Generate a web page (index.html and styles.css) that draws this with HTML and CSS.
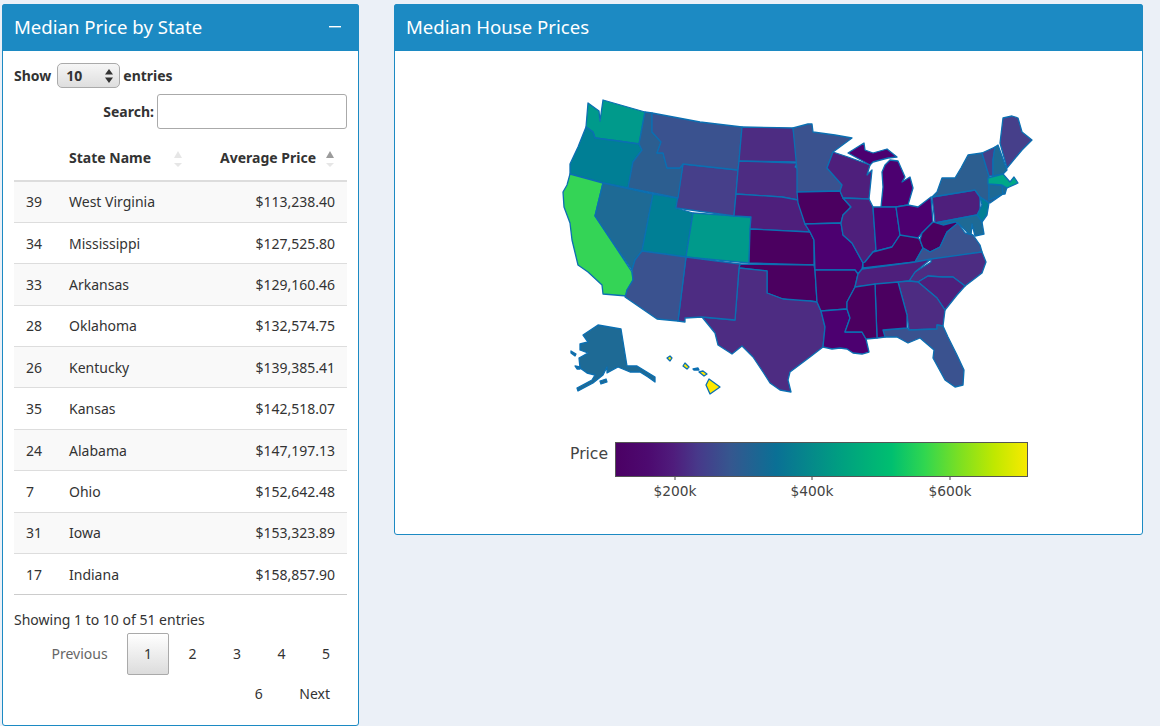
FILE: index.html
```html
<!DOCTYPE html>
<html lang="en">
<head>
  <meta charset="UTF-8" />
  <meta name="viewport" content="width=device-width, initial-scale=1" />
  <title>Median House Prices</title>
  <link rel="stylesheet" href="styles.css">
</head>
<body>

  <div class="dashboard">

    <!-- Table box -->
    <section class="box box-table">
      <header class="box-header">
        <h3>Median Price by State</h3>
        <svg class="collapse-icon" width="12" height="2" viewBox="0 0 12 2"><rect width="12" height="1.4" fill="#fff"/></svg>
      </header>
      <div class="box-body">
        <div class="length-row">
          <label>Show</label>
          <div class="select-wrap">
            <select><option>10</option><option>25</option><option>50</option></select>
            <svg class="select-arrows" width="8" height="14" viewBox="0 0 8 14"><path d="M4 0 8 5.500H0Z M4 14 0 8.500H8Z" fill="#333"/></svg>
          </div>
          <label>entries</label>
        </div>
        <div class="search-row">
          <label>Search:</label>
          <input type="search" />
        </div>

        <table class="price-table">
          <colgroup>
            <col class="col-id"><col class="col-name"><col class="col-price">
          </colgroup>
          <thead>
            <tr>
              <th></th>
              <th>
                <div class="th-name">State Name
                  <svg width="10" height="17" viewBox="0 0 10 17"><path class="sort-off" d="M5 0 9 7H1Z"/><path class="sort-off" d="M5 16 1 12H9Z"/></svg>
                </div>
              </th>
              <th>
                <div class="th-price">Average Price
                  <svg width="10" height="17" viewBox="0 0 10 17"><path class="sort-on" d="M5 0 9 7H1Z"/><path class="sort-off" d="M5 16 1 12H9Z"/></svg>
                </div>
              </th>
            </tr>
          </thead>
          <tbody>
            <tr><td>39</td><td>West Virginia</td><td>$113,238.40</td></tr>
            <tr><td>34</td><td>Mississippi</td><td>$127,525.80</td></tr>
            <tr><td>33</td><td>Arkansas</td><td>$129,160.46</td></tr>
            <tr><td>28</td><td>Oklahoma</td><td>$132,574.75</td></tr>
            <tr><td>26</td><td>Kentucky</td><td>$139,385.41</td></tr>
            <tr><td>35</td><td>Kansas</td><td>$142,518.07</td></tr>
            <tr><td>24</td><td>Alabama</td><td>$147,197.13</td></tr>
            <tr><td>7</td><td>Ohio</td><td>$152,642.48</td></tr>
            <tr><td>31</td><td>Iowa</td><td>$153,323.89</td></tr>
            <tr><td>17</td><td>Indiana</td><td>$158,857.90</td></tr>
          </tbody>
        </table>

        <div class="table-info">Showing 1 to 10 of 51 entries</div>
        <div class="pager">
          <a class="page muted">Previous</a>
          <a class="page current">1</a>
          <a class="page">2</a>
          <a class="page">3</a>
          <a class="page">4</a>
          <a class="page">5</a>
          <a class="page">6</a>
          <a class="page">Next</a>
        </div>
      </div>
    </section>

    <!-- Map box -->
    <section class="box box-map">
      <header class="box-header">
        <h3>Median House Prices</h3>
      </header>
      <svg class="plot" width="747" height="483" viewBox="395 51 747 483">
        <defs>
          <linearGradient id="priceScale">
            <stop offset="0" stop-color="#4b0064"/>
            <stop offset="0.08" stop-color="#4d0a70"/>
            <stop offset="0.14" stop-color="#4f1c7c"/>
            <stop offset="0.2" stop-color="#47398a"/>
            <stop offset="0.28" stop-color="#35578f"/>
            <stop offset="0.39" stop-color="#0a7095"/>
            <stop offset="0.55" stop-color="#00a080"/>
            <stop offset="0.67" stop-color="#00bf70"/>
            <stop offset="0.75" stop-color="#30d650"/>
            <stop offset="0.84" stop-color="#80e020"/>
            <stop offset="0.92" stop-color="#c0e800"/>
            <stop offset="1" stop-color="#f8ea00"/>
          </linearGradient>
        </defs>

        <g class="states">
          <polygon class="v-9" data-state="WA" points="588,103 599,111 600,121 603,100 645,112 639,144 618,141 595,138 593,132 586,127"/>
          <polygon class="v-8" data-state="OR" points="586,127 593,132 595,138 618,141 639,144 642,150 633,162 628,188 603,183 570,174 570,164 578,147"/>
          <polygon class="v-11" data-state="CA" points="570,174 603,183 595,216 611,240 632,272 633,280 627,290 627,296 603,294 602,285 588,272 578,265 572,240 570,223 564,207 563,192 567,185"/>
          <polygon class="v-7" data-state="NV" points="603,183 653,194 642,251 635,260 632,270 611,240 595,216"/>
          <polygon class="v-8" data-state="UT" points="653,194 678,198 676,208 693,213 686,257 642,251"/>
          <polygon class="v-9" data-state="CO" points="693,213 751,217 749,263 686,257"/>
          <polygon class="v-4" data-state="WY" points="683,164 738,170 734,216 676,208"/>
          <polygon class="v-6" data-state="ID" points="645,112 652,113 652,132 661,142 657,153 663,153 667,168 680,168 683,164 678,198 628,188 633,162 642,150 639,144"/>
          <polygon class="v-5" data-state="MT" points="652,113 700,122 742,127 739,161 738,170 683,164 680,168 667,168 663,153 657,153 661,142 652,132"/>
          <polygon class="v-3" data-state="ND" points="742,127 793,128 798,162 739,161"/>
          <polygon class="v-3" data-state="SD" points="739,161 797,163 795,167 800,170 798,200 782,197 736,194 738,170"/>
          <polygon class="v-2" data-state="NE" points="736,194 782,197 798,200 805,224 810,232 750,229 751,217 734,216"/>
          <polygon class="v-0" data-state="KS" points="750,229 810,232 814,240 814,265 749,263"/>
          <polygon class="v-0" data-state="OK" points="740,264 814,265 815,270 817,302 810,301 800,302 783,299 767,293 767,271 739,268"/>
          <polygon class="v-3" data-state="TX" points="739,268 767,271 767,293 783,299 810,301 817,302 821,311 825,327 823,347 810,357 790,372 788,380 791,392 780,390 770,383 763,372 753,357 742,346 732,354 718,345 715,333 702,317 735,320"/>
          <polygon class="v-3" data-state="NM" points="686,257 740,264 739,268 735,320 702,317 685,318 685,322 678,321"/>
          <polygon class="v-5" data-state="AZ" points="642,251 686,257 678,321 657,319 625,297 627,290 633,280 632,270 635,260"/>
          <polygon class="v-5" data-state="MN" points="793,128 808,124 812,124 813,132 835,135 852,138 833,152 827,168 842,185 840,191 797,192 797,170"/>
          <polygon class="v-0" data-state="IA" points="797,192 840,191 843,198 851,207 843,215 841,223 805,224 798,203"/>
          <polygon class="v-1" data-state="MO" points="805,224 841,223 843,235 852,243 863,263 862,269 858,274 855,270 815,270 814,240 810,232"/>
          <polygon class="v-0" data-state="AR" points="815,270 855,270 858,274 855,287 847,302 847,309 821,311 817,302"/>
          <polygon class="v-1" data-state="LA" points="821,311 847,309 850,318 845,332 862,332 866,339 869,352 862,354 853,353 847,349 840,348 832,349 823,347 825,327"/>
          <polygon class="v-2" data-state="WI" points="833,152 848,157 870,165 867,175 872,170 869,199 843,198 840,191 842,185 827,168"/>
          <polygon class="v-1" data-state="MI" points="848,153 864,143 865,150 873,153 887,149 897,157 888,158 873,162 870,165"/>
          <polygon class="v-1" data-state="MI" points="885,165 890,160 898,161 905,177 902,182 910,177 913,188 908,205 896,207 881,207 883,187 882,172"/>
          <polygon class="v-2" data-state="IL" points="843,198 869,199 873,207 876,250 873,252 865,262 863,263 852,243 843,235 841,223 843,215 851,207"/>
          <polygon class="v-1" data-state="IN" points="873,207 896,207 900,235 892,247 873,252 876,250"/>
          <polygon class="v-1" data-state="OH" points="896,207 908,205 918,207 931,197 933,222 922,233 918,238 902,237 900,235"/>
          <polygon class="v-0" data-state="KY" points="900,235 918,238 920,240 923,248 915,262 863,268 863,263 865,262 873,252 892,247"/>
          <polygon class="v-2" data-state="PA" points="932,197 975,190 980,197 980,210 977,215 935,223"/>
          <polygon class="v-6" data-state="NY" points="932,197 937,192 942,178 955,178 961,168 968,155 982,153 989,176 989,200 1003,194 990,203 980,197 975,190"/>
          <polygon class="v-8" data-state="NJ" points="980,197 989,203 987,215 982,222 977,215 982,205"/>
          <polygon class="v-7" data-state="MD" points="935,223 977,215 982,222 984,234 975,236 972,224 971,236 958,223 955,222 943,225"/>
          <polygon class="v-0" data-state="WV" points="933,222 943,225 955,222 958,223 947,232 940,247 930,252 923,248 920,240 922,233"/>
          <polygon class="v-5" data-state="VA" points="958,223 965,233 973,235 980,245 982,252 915,262 923,248 930,252 940,247 947,232"/>
          <polygon class="v-3" data-state="NC" points="982,252 986,262 982,273 965,286 953,277 942,277 928,276 918,282 909,281 915,272 931,262 931,259"/>
          <polygon class="v-2" data-state="TN" points="931,259 915,272 909,281 855,287 858,274 862,269 915,262"/>
          <polygon class="v-2" data-state="SC" points="918,282 928,276 942,277 953,277 965,286 957,295 945,310 937,298"/>
          <polygon class="v-3" data-state="GA" points="898,282 909,281 918,282 937,298 945,310 943,326 937,325 937,329 909,330 907,315"/>
          <polygon class="v-5" data-state="FL" points="883,330 907,328 909,330 937,329 937,325 943,326 948,337 957,355 964,370 963,385 955,387 945,380 933,358 934,350 920,338 908,343 897,337 885,337"/>
          <polygon class="v-0" data-state="AL" points="875,284 898,282 907,315 907,328 883,330 885,337 877,338"/>
          <polygon class="v-0" data-state="MS" points="855,287 875,284 877,338 866,339 862,332 845,332 850,318 847,309 847,302"/>
          <polygon class="v-4" data-state="VT" points="982,153 995,147 993,160 993,176 989,176"/>
          <polygon class="v-7" data-state="NH" points="995,147 998,145 1007,170 1003,174 993,176 993,160"/>
          <polygon class="v-4" data-state="ME" points="1000,143 1003,118 1012,116 1018,118 1022,132 1032,140 1022,150 1007,168"/>
          <polygon class="v-7" data-state="CT" points="989,184 1002,185 1003,194 989,200"/>
          <polygon class="v-7" data-state="RI" points="1002,185 1007,187 1005,194 1003,194"/>
          <polygon class="v-10" data-state="MA" points="988,178 1003,174 1010,182 1014,177 1018,183 1007,188 1002,185 988,184"/>

          <polygon class="v-7" data-state="AK" points="583,335 598,325 621,329 627,366 637,366 655,377 655,382 648,377 640,372 630,372 618,367 607,373 607,367 603,375 593,383 578,391 577,388 592,380 595,375 587,373 580,368 579,358 588,353 580,350 580,344 588,342"/>
          <polygon class="v-7" data-state="AK" points="571,351 576,354 575,356 571,353"/>
          <polygon class="v-7" data-state="AK" points="575,366 580,367 580,369 577,369"/>
          <polygon class="v-7" data-state="AK" points="600,381 606,379 607,382 601,384"/>

          <polygon class="v-12" data-state="HI" points="709,379 720,387 710,394 706,385"/>
          <polygon class="v-12" data-state="HI" points="699,372 703,371 707,374 704,376"/>
          <polygon class="v-12" data-state="HI" points="683,366 685,363 689,367 687,369"/>
          <polygon class="v-12" data-state="HI" points="667,358 670,356 672,358 670,361"/>
          <polygon class="v-7" data-state="HI" points="693,369 698,368 699,370 694,370"/>
        </g>

        <!-- Colour bar -->
        <text class="legend-title" x="570" y="459">Price</text>
        <rect class="colorbar" x="615.500" y="442.500" width="412" height="34" fill="url(#priceScale)"/>
        <path class="ticks" d="M675 477v3M812 477v3M950 477v3"/>
        <text class="tick-label" x="675" y="496">$200k</text>
        <text class="tick-label" x="812" y="496">$400k</text>
        <text class="tick-label" x="950" y="496">$600k</text>
      </svg>
    </section>

  </div>

</body>
</html>
```

FILE: styles.css
```css
* {
  box-sizing: border-box;
}

html, body {
  height: 726px;
  overflow: hidden;
}

body {
  margin: 0;
  background: #ebf0f7;
  color: #333;
  font-family: "Noto Sans", "Open Sans", sans-serif;
  font-size: 14px;
}

.dashboard {
  display: flex;
  align-items: flex-start;
  gap: 35px;
  padding: 4px 0 0 2px;
}

.box {
  background: #fff;
  border: 1px solid #1c8ac3;
  border-radius: 3px;
}

.box-table {
  width: 357px;
  height: 722px;
}

.box-map {
  width: 749px;
  height: 531px;
}

.box-header {
  display: flex;
  align-items: center;
  justify-content: space-between;
  height: 47px;
  margin: -1px -1px 0;
  padding: 0 18px 2px 12px;
  background: #1c8ac3;
  border-radius: 3px 3px 0 0;
  color: #fff;
}

.box-header h3 {
  margin: 0;
  font-size: 18.600px;
  font-weight: 400;
}

.box-body {
  padding: 12px 11px 0;
}

.plot {
  display: block;
}

/* Table controls */
.length-row {
  display: flex;
  align-items: center;
  gap: 4px;
  height: 25px;
  font-weight: 700;
}

.select-wrap {
  position: relative;
  width: 63px;
  height: 25px;
  margin: 0 -1px 0 2px;
}

.select-wrap select {
  appearance: none;
  width: 100%;
  height: 100%;
  padding: 0 0 0 8px;
  border: 1px solid #aaa;
  border-radius: 5px;
  background: linear-gradient(#f6f6f6, #dedede);
  color: #333;
  font: 700 14px "Noto Sans", sans-serif;
}

.select-arrows {
  position: absolute;
  top: 6px;
  right: 7px;
  pointer-events: none;
}

.search-row {
  display: flex;
  align-items: center;
  justify-content: flex-end;
  gap: 3px;
  margin-top: 6px;
  font-weight: 700;
}

.search-row input {
  width: 190px;
  height: 35px;
  padding: 0 6px;
  border: 1px solid #aaa;
  border-radius: 3px;
  background: #fff;
}

/* Table */
.price-table {
  width: 333px;
  margin-top: 11px;
  border-collapse: collapse;
  table-layout: fixed;
}

.col-id {
  width: 43px;
}

.col-price {
  width: 152px;
}

.price-table th {
  height: 41px;
  padding: 0 12px 5px;
  border-bottom: 2px solid #ddd;
  font-weight: 700;
  text-align: left;
}

.th-name {
  display: flex;
  align-items: center;
  justify-content: space-between;
}

.th-price {
  display: flex;
  align-items: center;
  justify-content: flex-end;
  gap: 9px;
}

.th-name svg,
.th-price svg {
  margin-bottom: -3px;
}

.sort-off {
  fill: #e6e6e6;
}

.sort-on {
  fill: #9b9b9b;
}

.price-table td {
  height: 41.400px;
  padding: 0 12px;
  border-top: 1px solid #ddd;
}

.price-table td:last-child {
  text-align: right;
}

.price-table tbody tr:nth-child(odd) {
  background: #f9f9f9;
}

.price-table tbody tr:last-child td {
  border-bottom: 1px solid #ccc;
}

/* Info and paging */
.table-info {
  margin-top: 15px;
  line-height: 20px;
}

.pager {
  margin-top: 4px;
  line-height: 40px;
  text-align: right;
  word-spacing: -1.200px;
}

.page {
  display: inline-block;
  margin: -1px 0;
  padding: 10px 16px;
  border: 1px solid transparent;
  border-radius: 2px;
  line-height: 20px;
  word-spacing: 0;
}

.page.muted {
  color: #666;
}

.page.current {
  border-color: #aaa;
  background: linear-gradient(#fff, #dcdcdc);
}

/* Plot */
.states polygon {
  stroke: #0b6fb2;
  stroke-width: 1.300;
  stroke-linejoin: round;
}

.v-0 { fill: #4b0060; }
.v-1 { fill: #4c0070; }
.v-2 { fill: #4e1f7c; }
.v-3 { fill: #4d2c82; }
.v-4 { fill: #463f8a; }
.v-5 { fill: #3a528f; }
.v-6 { fill: #2c5e90; }
.v-7 { fill: #1e6a95; }
.v-8 { fill: #007f95; }
.v-9 { fill: #009a8b; }
.v-10 { fill: #00a888; }
.v-11 { fill: #34d456; }
.v-12 { fill: #ffe800; }

.colorbar {
  stroke: #555;
  stroke-width: 1;
}

.ticks {
  stroke: #444;
  stroke-width: 1;
}

.legend-title {
  fill: #444;
  font: 15.600px "DejaVu Sans", sans-serif;
}

.tick-label {
  fill: #444;
  font: 13.800px "DejaVu Sans", sans-serif;
  text-anchor: middle;
}
```
